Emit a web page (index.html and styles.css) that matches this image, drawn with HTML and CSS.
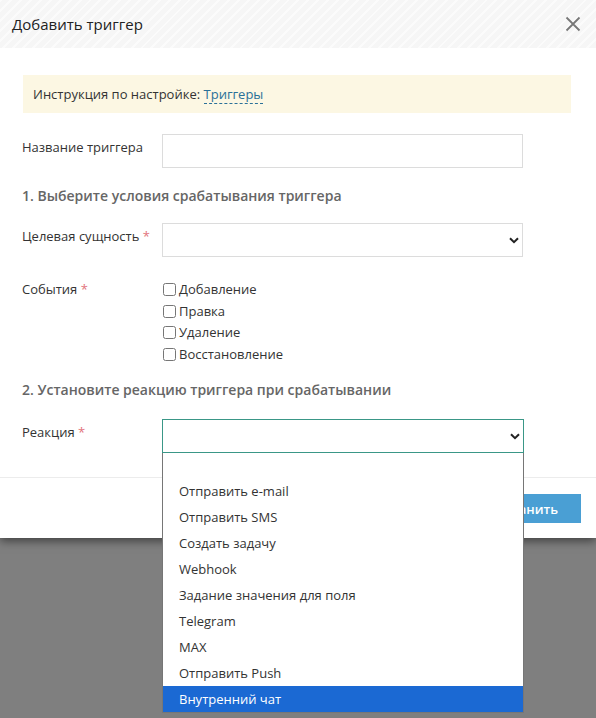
FILE: index.html
```html
<!DOCTYPE html>
<html lang="ru">
<head>
<meta charset="utf-8">
<title>Добавить триггер</title>
<link rel="stylesheet" href="styles.css">
</head>
<body>
<div class="modal">
  <div class="modal-header">
    <span class="modal-title">Добавить триггер</span>
    <span class="close" aria-label="Закрыть">
      <svg width="16" height="16" viewBox="0 0 16 16"><path d="M1.5 1.5 L14.5 14.5 M14.5 1.5 L1.5 14.5" stroke="#777" stroke-width="1.8" fill="none"/></svg>
    </span>
  </div>
  <div class="modal-body">
    <div class="notice">Инструкция по настройке: <a class="doc-link" href="#">Триггеры</a></div>

    <div class="row row-name">
      <label class="label">Название триггера</label>
      <div class="field input"></div>
    </div>

    <h3 class="section section-1">1. Выберите условия срабатывания триггера</h3>

    <div class="row row-entity">
      <label class="label">Целевая сущность <span class="req">*</span></label>
      <div class="field select">
        <svg class="chev" width="10" height="7" viewBox="0 0 10 7"><path d="M1 1.2 L5 5.2 L9 1.2" stroke="#222" stroke-width="2" fill="none"/></svg>
      </div>
    </div>

    <div class="row row-events">
      <label class="label">События <span class="req">*</span></label>
      <div class="checks">
        <label class="check"><input type="checkbox"> Добавление</label>
        <label class="check"><input type="checkbox"> Правка</label>
        <label class="check"><input type="checkbox"> Удаление</label>
        <label class="check"><input type="checkbox"> Восстановление</label>
      </div>
    </div>

    <h3 class="section section-2">2. Установите реакцию триггера при срабатывании</h3>

    <div class="row row-reaction">
      <label class="label">Реакция <span class="req">*</span></label>
      <div class="select-wrap">
        <div class="field select focused">
          <svg class="chev" width="10" height="7" viewBox="0 0 10 7"><path d="M1 1.2 L5 5.2 L9 1.2" stroke="#222" stroke-width="2" fill="none"/></svg>
        </div>
        <ul class="dropdown">
          <li class="opt opt-empty">&nbsp;</li>
          <li class="opt">Отправить e-mail</li>
          <li class="opt">Отправить SMS</li>
          <li class="opt">Создать задачу</li>
          <li class="opt">Webhook</li>
          <li class="opt">Задание значения для поля</li>
          <li class="opt">Telegram</li>
          <li class="opt">MAX</li>
          <li class="opt">Отправить Push</li>
          <li class="opt active">Внутренний чат</li>
        </ul>
      </div>
    </div>
  </div>
  <div class="modal-footer">
    <button class="btn-save" type="button">Сохранить</button>
  </div>
</div>
</body>
</html>
```
FILE: styles.css
```css
html, body {
  margin: 0;
  padding: 0;
}
body {
  background: #7f7f7f;
  font-family: "Open Sans", "Liberation Sans", sans-serif;
  font-size: 13px;
  color: #333;
  width: 596px;
  height: 718px;
  overflow: hidden;
}
.modal {
  background: #fff;
  width: 596px;
  box-shadow: 0 3px 9px rgba(0, 0, 0, 0.5);
}
.modal-header {
  height: 48px;
  background: #f6f6f6;
  background-image: repeating-linear-gradient(135deg, rgba(255,255,255,0.6) 0 2px, rgba(0,0,0,0) 2px 7px);
  display: flex;
  align-items: center;
  justify-content: space-between;
  padding: 0 15px 0 12px;
}
.modal-title {
  font-size: 15px;
  color: #222;
  line-height: 20px;
}
.close {
  display: flex;
  width: 16px;
  height: 16px;
}
.modal-body {
  padding: 27px 73px 24px 23px;
}
.notice {
  background: #fcf7e3;
  height: 38px;
  line-height: 38px;
  padding: 0 10px;
  margin-right: -48px;
  margin-bottom: 21px;
  color: #333;
}
.doc-link {
  color: #2a7098;
  text-decoration: none;
  border-bottom: 1px dashed #2a7098;
}
.row {
  display: flex;
  align-items: flex-start;
}
.label {
  width: 140px;
  margin-left: -1px;
  padding-top: 3px;
  line-height: 20px;
  flex: none;
}
.req {
  color: #e2737b;
}
.field {
  width: 362px;
  height: 34px;
  box-sizing: border-box;
  border: 1px solid #dcdcdc;
  background: #fff;
}
.select {
  display: flex;
  align-items: center;
  justify-content: flex-end;
  padding-right: 3px;
}
.chev {
  display: block;
}
.focused {
  border-color: #3a9787;
}
.row-name {
  margin-bottom: 18px;
}
.section {
  margin: 0;
  font-size: 14px;
  line-height: 20px;
  font-weight: 600;
  color: #666;
  margin-left: -1px;
}
.section-1 {
  margin-bottom: 17px;
}
.row-entity {
  margin-bottom: 21px;
}
.row-events .label {
  padding-top: 1px;
}
.checks {
  display: flex;
  flex-direction: column;
  margin-top: 1px;
}
.check {
  display: flex;
  align-items: center;
  height: 21.5px;
  line-height: 21.5px;
}
.check input {
  margin: 0 3px 0 1px;
  width: 13px;
  height: 13px;
}
.section-2 {
  margin-top: 15px;
  margin-bottom: 19px;
}
.select-wrap {
  position: relative;
  width: 362px;
}
.dropdown {
  position: absolute;
  top: 34px;
  left: 0;
  width: 362px;
  box-sizing: border-box;
  margin: 0;
  padding: 0;
  list-style: none;
  background: #fff;
  border: 1px solid #767676;
  border-top: none;
  z-index: 10;
}
.opt {
  height: 26px;
  line-height: 26px;
  padding-left: 16px;
  color: #333;
  white-space: nowrap;
}
.opt-empty {
  height: 25px;
}
.opt.active {
  background: #1b69d3;
  color: #fff;
}
.modal-footer {
  border-top: 1px solid #ececec;
  padding: 16px 15px 15px;
  display: flex;
  justify-content: flex-end;
}
.btn-save {
  height: 29px;
  padding: 0 23px;
  border: none;
  background: #4a9fd4;
  color: #fff;
  font-family: "Open Sans", "Liberation Sans", sans-serif;
  font-size: 13px;
  font-weight: 600;
}
```
